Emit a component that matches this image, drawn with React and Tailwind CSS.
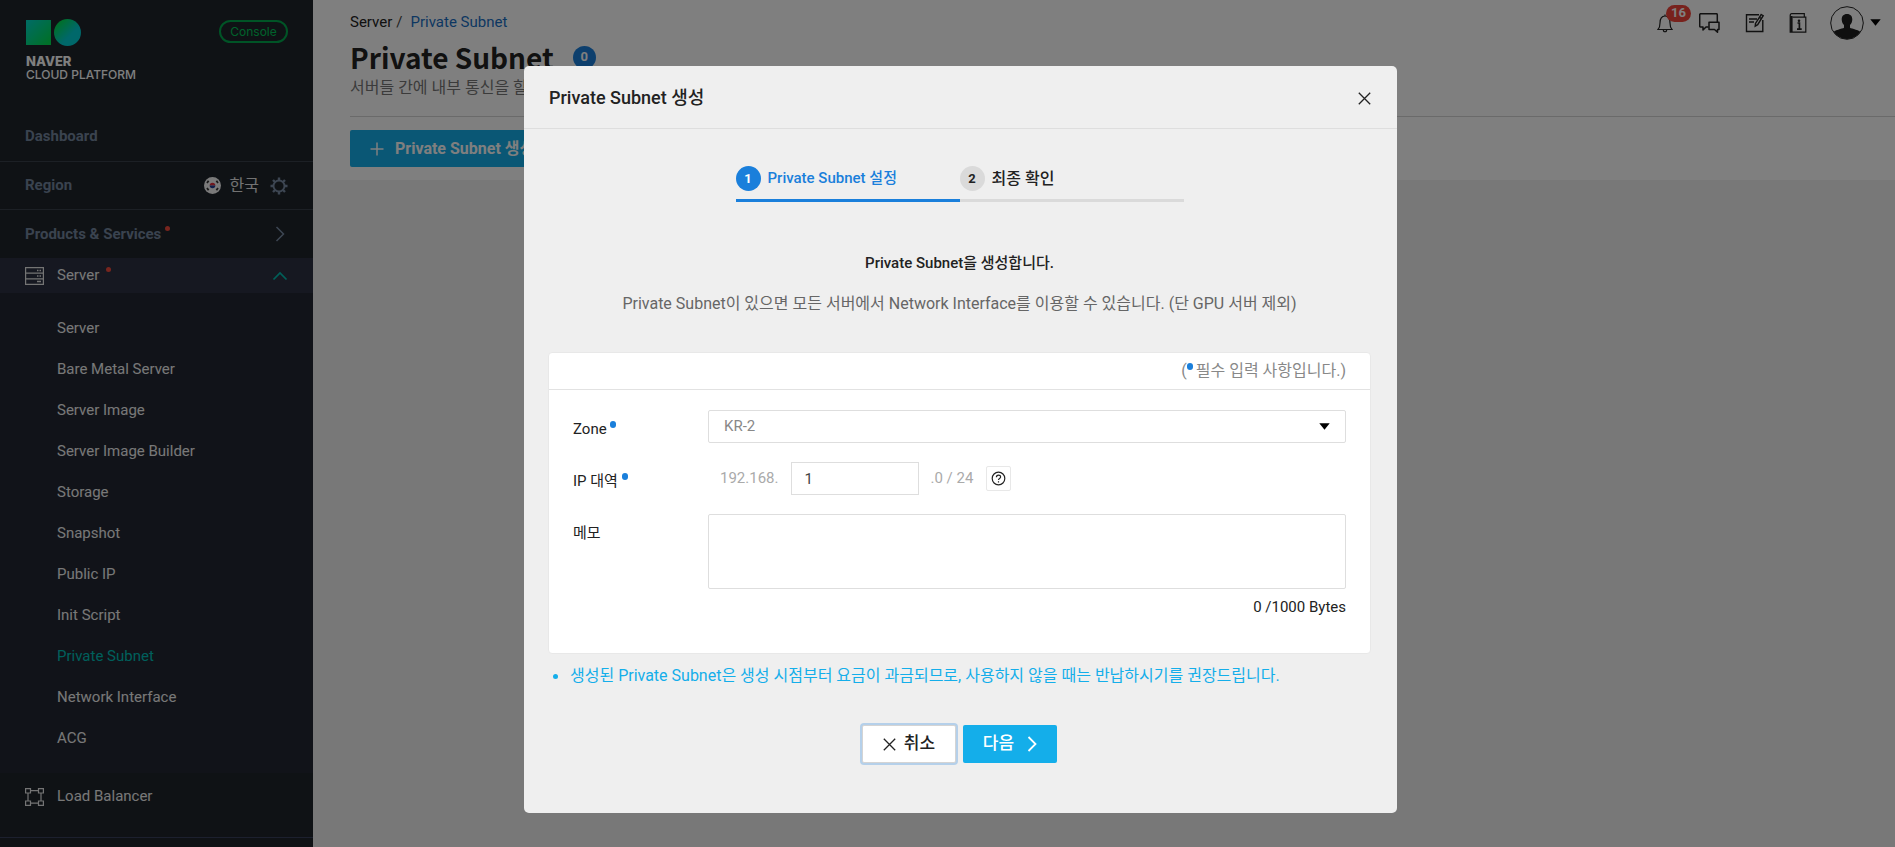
import React, { useState } from "react";

const SERVER_MENU = [
  "Server",
  "Bare Metal Server",
  "Server Image",
  "Server Image Builder",
  "Storage",
  "Snapshot",
  "Public IP",
  "Init Script",
  "Private Subnet",
  "Network Interface",
  "ACG",
];

function Logo() {
  return (
    <svg width="56" height="28" viewBox="0 0 56 28" aria-hidden="true">
      <defs>
        <linearGradient id="sq" x1="0" y1="0" x2="1" y2="1">
          <stop offset="0.1" stopColor="#00d8c0" />
          <stop offset="0.9" stopColor="#00e052" />
        </linearGradient>
        <linearGradient id="ci" x1="0" y1="0" x2="1" y2="1">
          <stop offset="0.15" stopColor="#00e052" />
          <stop offset="0.6" stopColor="#00d0d4" />
        </linearGradient>
      </defs>
      <rect x="0" y="1" width="25" height="25" fill="url(#sq)" />
      <circle cx="41.500" cy="13.500" r="13.500" fill="url(#ci)" />
    </svg>
  );
}

function KoreaFlag() {
  return (
    <svg width="17" height="17" viewBox="0 0 17 17" aria-hidden="true">
      <circle cx="8.500" cy="8.500" r="8.500" fill="#f4f4f4" />
      <path d="M5.700 8.500a2.800 2.800 0 0 1 5.600 0z" fill="#e0303c" />
      <path d="M5.700 8.500a2.800 2.800 0 0 0 5.600 0z" fill="#1c3f94" />
      <g stroke="#333" strokeWidth="1.800">
        <path d="M3 6l1.600-2.200M12.400 3.800L14 6M3 11l1.600 2.200M12.400 13.200L14 11" />
      </g>
    </svg>
  );
}

function Gear() {
  return (
    <svg width="18" height="18" viewBox="0 0 18 18" fill="none" stroke="#7a8ca5" aria-hidden="true">
      <circle cx="9" cy="9" r="5.500" strokeWidth="1.900" />
      <path
        strokeWidth="2.400"
        d="M9 .5v3M9 14.500v3M.5 9h3M14.500 9h3M3 3l2 2M13 13l2 2M3 15l2-2M13 5l2-2"
      />
    </svg>
  );
}

function ServerIcon() {
  return (
    <svg width="19" height="18" viewBox="0 0 19 18" fill="none" stroke="#e8e8e8" strokeWidth="1.200" aria-hidden="true">
      <path d="M.6.6h17.800v16.800H.6zM.5 6.200h18M.5 11.800h18" />
      <path d="M12 3.500h1.500M14.500 3.500h1.500M12 9h1.500M14.500 9h1.500M12 14.500h4" strokeWidth="1.400" />
    </svg>
  );
}

function BalancerIcon() {
  return (
    <svg width="19" height="18" viewBox="0 0 19 18" fill="none" stroke="#e8e8e8" strokeWidth="1.200" aria-hidden="true">
      <path d="M.6.6h4.900v4.400H.6zM13.500.6h4.900v4.400h-4.900zM.6 13h4.900v4.400H.6zM13.500 13h4.900v4.400h-4.900z" />
      <path d="M5.500 2.700h8M5.500 15.200h8M3 5v8M16 5v8" />
    </svg>
  );
}

function RedDot() {
  return <span className="mb-3 size-[5px] self-center rounded-full bg-[#f04a3c]" />;
}

function Required() {
  return <span className="inline-block h-[7px] w-[6px] -translate-y-1.5 rounded-full bg-[#1a7fdb]" />;
}

function Sidebar() {
  return (
    <aside className="flex w-[313px] shrink-0 flex-col bg-[#1e242b]">
      <div className="flex items-start justify-between pt-[19px] pr-[25px] pl-[26px]">
        <div>
          <Logo />
          <div className="mt-2 font-[Inter,sans-serif] text-xs leading-[13px] text-white">
            <div className="text-[13px] leading-[13px] font-extrabold">NAVER</div>
            <div className="font-medium">CLOUD PLATFORM</div>
          </div>
        </div>
        <a
          href="#console"
          className="mt-px flex h-[23px] w-[69px] items-center justify-center rounded-full border-2 border-[#00a84c] font-[Inter,sans-serif] text-xs text-[#00c457]"
        >
          Console
        </a>
      </div>

      <nav className="mt-[30px] text-[15px] font-bold text-[#75879f]">
        <a href="#dashboard" className="flex h-[51px] items-center border-b border-[#39414b] pl-[25px]">
          Dashboard
        </a>
        <div className="flex h-12 items-center border-b border-[#39414b] pr-[25px] pl-[25px]">
          <span className="grow">Region</span>
          <KoreaFlag />
          <span className="mr-[11px] ml-[9px] text-base font-normal text-[#e4e4e4]">한국</span>
          <button type="button" aria-label="Region settings">
            <Gear />
          </button>
        </div>
        <a href="#products" className="flex h-12 items-center gap-1 pr-[28px] pl-[25px]">
          Products &amp; Services
          <RedDot />
          <svg className="ml-auto" width="10" height="16" viewBox="0 0 10 16" fill="none" stroke="#7a8ca5" strokeWidth="1.500" aria-hidden="true">
            <path d="M1.500 1l7 7-7 7" />
          </svg>
        </a>
      </nav>

      <nav className="text-[15px] text-[#f0f0f0]">
        <a href="#server" className="flex h-[35px] items-center bg-[#2c3142] pr-[25px] pl-[25px]">
          <ServerIcon />
          <span className="mr-[7px] ml-[13px]">Server</span>
          <RedDot />
          <svg className="ml-auto" width="16" height="10" viewBox="0 0 16 10" fill="none" stroke="#00bfb3" strokeWidth="1.700" aria-hidden="true">
            <path d="M1.500 8.500L8 2l6.500 6.500" />
          </svg>
        </a>
        <ul className="bg-[#222732] pt-[15px] pb-[14px]">
          {SERVER_MENU.map((item) => (
            <li key={item}>
              <a
                href="#menu"
                className={
                  item === "Private Subnet"
                    ? "flex h-[41px] items-center pl-[57px] text-[#00bfb8]"
                    : "flex h-[41px] items-center pl-[57px]"
                }
              >
                {item}
              </a>
            </li>
          ))}
        </ul>
        <a href="#load-balancer" className="flex h-[47px] items-center pl-[25px]">
          <BalancerIcon />
          <span className="ml-[13px]">Load Balancer</span>
        </a>
        <div className="mt-[17px] border-t border-[#39415c]" />
      </nav>
    </aside>
  );
}

function HeaderIcons() {
  return (
    <div className="flex items-center pr-[14px]">
      <button type="button" aria-label="Notifications" className="relative mr-[26px]">
        <svg width="16" height="20" viewBox="0 0 16 20" fill="none" stroke="#222" strokeWidth="1.200" aria-hidden="true">
          <path d="M1 16.500c1.400-1.500 2-3 2-6.500 0-4.500 1.700-7 5-7s5 2.500 5 7c0 3.500.6 5 2 6.500zM8 3V1.500M6.300 16.500c0 3 3.400 3 3.400 0" />
        </svg>
        <span className="absolute -top-2 left-[9px] flex h-[17px] w-[25px] items-center justify-center rounded-full bg-[#f0453a] text-[13px] font-bold text-white">
          16
        </span>
      </button>
      <button type="button" aria-label="Chat" className="mr-[25px]">
        <svg width="21" height="20" viewBox="0 0 21 20" fill="none" stroke="#222" strokeWidth="1.500" strokeLinejoin="round" aria-hidden="true">
          <path d="M9.500 14H7l-3 3v-3H1.700a1 1 0 0 1-1-1V1.700a1 1 0 0 1 1-1h15.600a1 1 0 0 1 1 1V9" />
          <path d="M10 9.200h10v7.300h-1.500v2.800l-3-2.800H10z" />
        </svg>
      </button>
      <button type="button" aria-label="Notes" className="mr-[24px]">
        <svg width="20" height="20" viewBox="0 0 20 20" fill="none" stroke="#222" strokeWidth="1.400" aria-hidden="true">
          <path d="M14 1.700H1.500v16.800h16.300V7M4 6h8M4 9h5" />
          <path d="M16.200 1.500l2 1.200-5.500 9-2.500 1.500.3-2.800zM14.500 4.300l2 1.200" />
        </svg>
      </button>
      <button type="button" aria-label="Guide" className="mr-[23px]">
        <svg width="18" height="20" viewBox="0 0 18 20" fill="none" stroke="#222" aria-hidden="true">
          <path strokeWidth="1.200" d="M3.500 4.200h13.300v15H1.200V2.500c0-1 .6-1.800 1.600-1.800h12.500v3.500" />
          <path strokeWidth="2.400" d="M2.400 3v16" />
          <path strokeWidth="1.700" d="M8.500 10h1.900v6M8 16.200h4.700" />
          <circle cx="10" cy="7.700" r="1.300" fill="#222" stroke="none" />
        </svg>
      </button>
      <button type="button" aria-label="Account" className="flex items-center gap-[6px]">
        <svg width="34" height="34" viewBox="0 0 34 34" aria-hidden="true">
          <defs>
            <clipPath id="face">
              <circle cx="17" cy="17" r="16" />
            </clipPath>
          </defs>
          <g clipPath="url(#face)" fill="#1f1f1f">
            <path d="M17 8c3.600 0 5.300 2.300 5.300 5.500 0 2.200-1 4.300-2.300 5.600v2.600c1.500 1.200 10 1.800 12 6V34H2v-6.300c2-4.200 10.500-4.800 12-6v-2.600c-1.300-1.300-2.300-3.400-2.300-5.600C11.700 10.300 13.400 8 17 8z" />
          </g>
          <circle cx="17" cy="17" r="16.300" fill="none" stroke="#222" />
        </svg>
        <svg width="11" height="7" viewBox="0 0 11 7" aria-hidden="true">
          <path d="M.3.3h10.400L5.500 6.800z" fill="#000" />
        </svg>
      </button>
    </div>
  );
}

function PageHeader() {
  return (
    <header className="bg-white pt-1 pb-[13px] pl-[37px]">
      <div className="flex h-[37px] items-center justify-between">
        <div className="text-[15px]">
          <a href="#server" className="text-[#222]">Server</a>
          <span className="mr-2 ml-1 text-[#444]">/</span>
          <a href="#private-subnet" className="text-[#1a6fc4]">Private Subnet</a>
        </div>
        <HeaderIcons />
      </div>
      <div className="flex h-8 items-center gap-[19px]">
        <h1 className="font-['Noto_Sans_CJK_KR',sans-serif] text-[28px] leading-8 font-bold text-[#222]">
          Private Subnet
        </h1>
        <span className="flex size-[23px] items-center justify-center rounded-full bg-[#1a7fdb] text-[13px] font-bold text-white">
          0
        </span>
      </div>
      <p className="mt-[3px] text-base leading-6 text-[#777]">서버들 간에 내부 통신을 할 수 있습니다.</p>
      <hr className="mt-4 mb-[13px] border-[#d4d4d4]" />
      <button
        type="button"
        className="flex h-[37px] items-center gap-[11px] rounded-xs bg-[#14aeea] px-5 text-base font-bold text-white"
      >
        <svg width="14" height="14" viewBox="0 0 14 14" stroke="#fff" strokeWidth="1.500" aria-hidden="true">
          <path d="M7 .5v13M.5 7h13" />
        </svg>
        Private Subnet 생성
      </button>
    </header>
  );
}

function CrossIcon() {
  return (
    <svg width="13" height="13" viewBox="0 0 13 13" stroke="#222" strokeWidth="1.300" aria-hidden="true">
      <path d="M.8.8l11.400 11.400M12.200.8L.8 12.200" />
    </svg>
  );
}

function Steps() {
  return (
    <ol className="mx-auto mt-[37px] flex w-[448px] max-w-full text-[15px] leading-[25px] font-medium">
      <li className="flex flex-1 items-center gap-[7px] border-b-3 border-[#1a7fdb] pb-2 text-[#1a7fdb]">
        <span className="flex size-[25px] items-center justify-center rounded-full bg-[#1a7fdb] text-[13px] font-bold text-white">
          1
        </span>
        Private Subnet 설정
      </li>
      <li className="flex flex-1 items-center gap-[7px] border-b-3 border-[#dadada] pb-2 text-[#222]">
        <span className="flex size-[25px] items-center justify-center rounded-full bg-[#dadada] text-[13px] font-bold">
          2
        </span>
        <span className="text-base leading-[25px]">최종 확인</span>
      </li>
    </ol>
  );
}

function SubnetForm() {
  const [zone, setZone] = useState("KR-2");
  const [ip, setIp] = useState("1");
  const [memo, setMemo] = useState("");
  return (
    <form className="rounded-sm border border-[#e8e8e8] bg-white pb-[34px]">
      <div className="flex h-[37px] items-center justify-end border-b border-[#e2e2e2] pr-6 text-base text-[#888]">
        <span>
          (<Required />
          <span className="ml-[3px]">필수 입력 사항입니다.)</span>
        </span>
      </div>
      <div className="px-6 pt-5">
        <div className="flex">
          <label htmlFor="zone" className="w-[135px] shrink-0 pt-[7px] leading-6">
            Zone <Required />
          </label>
          <div className="relative grow">
            <select
              id="zone"
              value={zone}
              onChange={(e) => setZone(e.target.value)}
              className="h-[33px] w-full appearance-none rounded-xs border border-[#dedede] bg-white px-[15px] text-[#888]"
            >
              <option>KR-2</option>
              <option>KR-1</option>
            </select>
            <svg className="pointer-events-none absolute top-[13px] right-4" width="11" height="7" viewBox="0 0 11 7" aria-hidden="true">
              <path d="M.3.3h10.400L5.500 6.800z" fill="#000" />
            </svg>
          </div>
        </div>
        <div className="mt-[19px] flex">
          <label htmlFor="ip" className="w-[135px] shrink-0 pt-[7px] leading-6">
            IP 대역 <Required />
          </label>
          <div className="flex items-center text-[#aaa]">
            <span className="ml-[12px]">192.168.</span>
            <input
              id="ip"
              value={ip}
              onChange={(e) => setIp(e.target.value)}
              className="mx-[12px] h-[33px] w-[128px] border border-[#dedede] px-[13px] text-[#444]"
            />
            <span>.0 / 24</span>
            <button
              type="button"
              aria-label="Help"
              className="ml-[13px] flex size-[25px] items-center justify-center rounded-xs border border-[#e8e8e8]"
            >
              <svg width="15" height="15" viewBox="0 0 15 15" fill="none" stroke="#222" strokeWidth="1.200" aria-hidden="true">
                <circle cx="7.500" cy="7.500" r="6.300" />
                <path d="M5.400 6.200c0-2.800 4.200-2.800 4.200-.2 0 1.500-2.100 1.400-2.100 3M7.500 10.200v1.300" />
              </svg>
            </button>
          </div>
        </div>
        <div className="mt-[19px] flex">
          <label htmlFor="memo" className="w-[135px] shrink-0 pt-[7px] leading-6">
            메모
          </label>
          <div className="flex grow flex-col">
            <textarea
              id="memo"
              value={memo}
              onChange={(e) => setMemo(e.target.value)}
              className="h-[75px] resize-none rounded-xs border border-[#dedede] px-[15px] py-2"
            />
            <span className="mt-1.5 text-right leading-6">{memo.length} /1000 Bytes</span>
          </div>
        </div>
      </div>
    </form>
  );
}

function Dialog() {
  return (
    <div className="fixed inset-0 flex items-start justify-center bg-black/50 pt-[66px] pl-[26px]">
      <div
        role="dialog"
        aria-modal="true"
        aria-labelledby="dialog-title"
        className="w-[873px] max-w-full rounded-[5px] bg-[#efefef] pb-[50px] text-[15px] text-[#222]"
      >
        <div className="flex h-[63px] items-center justify-between border-b border-[#dedede] pt-0.5 pr-[26px] pl-[25px]">
          <h2 id="dialog-title" className="text-lg font-medium">
            Private Subnet 생성
          </h2>
          <button type="button" aria-label="Close">
            <CrossIcon />
          </button>
        </div>
        <div className="pr-[26px] pl-6">
          <Steps />
          <p className="mt-[49px] text-center leading-6 font-medium">Private Subnet을 생성합니다.</p>
          <p className="mt-[17px] mb-[36px] text-center text-base leading-6 text-[#666]">
            Private Subnet이 있으면 모든 서버에서 Network Interface를 이용할 수 있습니다. (단 GPU 서버 제외)
          </p>
          <SubnetForm />
          <ul className="mt-[10px] text-base leading-6 text-[#14aeea]">
            <li className="flex items-center gap-3 pl-[5px]">
              <span className="size-[5px] rounded-full bg-[#14aeea]" />
              생성된 Private Subnet은 생성 시점부터 요금이 과금되므로, 사용하지 않을 때는 반납하시기를 권장드립니다.
            </li>
          </ul>
          <div className="mt-[37px] flex justify-center gap-[7px] text-[17px] font-medium">
            <button
              type="button"
              className="flex h-[38px] w-[94px] items-center justify-center gap-2 rounded-xs border border-[#d4d4d4] bg-white ring-2 ring-[#b5d0ea]"
            >
              <CrossIcon />
              취소
            </button>
            <button
              type="button"
              className="flex h-[38px] w-[94px] items-center justify-center gap-[13px] rounded-xs bg-[#14aeea] text-white"
            >
              다음
              <svg width="10" height="16" viewBox="0 0 10 16" fill="none" stroke="#fff" strokeWidth="1.800" aria-hidden="true">
                <path d="M1.500 1l7 7-7 7" />
              </svg>
            </button>
          </div>
        </div>
      </div>
    </div>
  );
}

export default function App() {
  return (
    <div className="flex min-h-screen bg-[#f0f0f0] font-[Roboto,'Noto_Sans_CJK_KR',sans-serif]">
      <Sidebar />
      <main className="min-w-0 grow">
        <PageHeader />
      </main>
      <Dialog />
    </div>
  );
}
